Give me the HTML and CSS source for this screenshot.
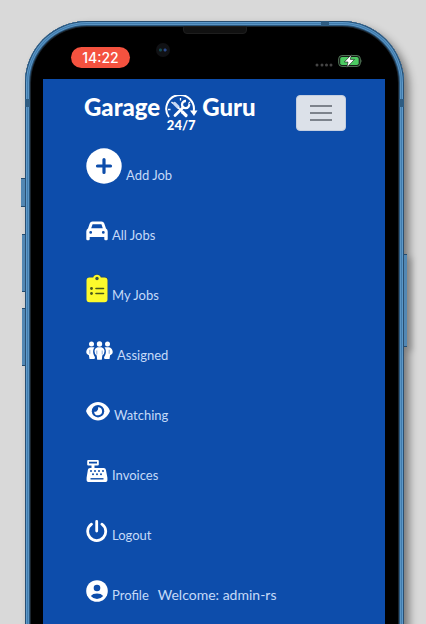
FILE: index.html
```
<!DOCTYPE html>
<html lang="en">
<head>
<meta charset="utf-8">
<meta name="viewport" content="width=device-width, initial-scale=1">
<title>Garage Guru 24/7</title>
<link rel="stylesheet" href="styles.css">
</head>
<body>
<div class="phone">
  <span class="side-key key-mute"></span>
  <span class="side-key key-up"></span>
  <span class="side-key key-down"></span>
  <span class="side-key key-power"></span>
  <span class="band band-top"></span>
  <span class="band band-left"></span>
  <span class="band band-right"></span>
  <span class="speaker"></span>
  <span class="camera"></span>
  <div class="status">
    <span class="time">14:22</span>
    <span class="indicators">
      <svg width="18" height="12" viewBox="0 0 18 12" fill="#454545"><circle cx="2" cy="10" r="1.500"/><circle cx="7" cy="10" r="1.500"/><circle cx="11.500" cy="10" r="1.500"/><circle cx="16" cy="10" r="1.500"/></svg>
      <svg width="25" height="14" viewBox="0 0 25 14"><rect x=".7" y="1.600" width="21.600" height="10.800" rx="3.200" fill="#111" stroke="#557d5c"/><rect x="2.200" y="3" width="18.500" height="8" rx="1.800" fill="#4ccb62"/><path d="M23.500 5.200q1.300 1.800 0 3.600z" fill="#557d5c"/><path d="M13.500.4 6.300 8H10L8.800 13.600l7.700-8.200h-4.200z" fill="#fff" stroke="#111" stroke-width=".6"/></svg>
    </span>
  </div>
  <div class="screen">
    <header class="header">
      <a class="logo" href="#">
        <span>Garage</span>
        <span class="emblem">
          <svg width="34" height="25" viewBox="0 0 34 25" fill="none" stroke="#fff">
            <path d="M5 22A13.800 13.800 0 1 1 29.500 17" stroke-width="2"/>
            <path d="M26 15.500h7.500L30 21z" fill="#fff" stroke="none"/>
            <path d="M16.500 3v2.500M7.500 7l1.500 1.500M4 14.500h2.500M26 7l-1.600 1.600" stroke-width="1.300"/>
            <path d="m11 20.500 8-8" stroke-width="2.800" stroke-linecap="round"/>
            <path d="M25.200 9.200a3.600 3.600 0 1 1-3.200-3.200" stroke-width="2.300"/>
            <path d="m10.500 8.500 3.500 3.500" stroke-width="3.200" stroke-linecap="round" stroke="#c8d9f4"/>
            <path d="m14 12.500 4 4" stroke-width="1.600"/>
            <path d="m18.500 17 3.500 3.500" stroke-width="3.200" stroke-linecap="round"/>
          </svg>
          <span class="hours">24/7</span>
        </span>
        <span>Guru</span>
      </a>
      <button class="toggle" type="button" aria-label="Menu">
        <svg width="22" height="18" viewBox="0 0 22 18" stroke="#7d838c" stroke-width="2"><path d="M0 2h22M0 9h22M0 16h22"/></svg>
      </button>
    </header>
    <nav>
      <ul class="menu">
        <li><a href="#"><svg width="36" height="36" viewBox="0 0 36 36"><circle cx="18" cy="18" r="17.700" fill="#fff"/><path d="M18 11.500v13M11.500 18h13" stroke="#0d4dab" stroke-width="3.200" stroke-linecap="round"/></svg><span>Add Job</span></a></li>
        <li><a href="#"><svg width="22" height="23" viewBox="0 0 22 23"><path fill="#fff" fill-rule="evenodd" d="M6.500.5h9a3 3 0 0 1 2.800 2l1.700 5a3.500 3.500 0 0 1 1.700 3V18a1.200 1.200 0 0 1-1.200 1.200h-1A1.200 1.200 0 0 1 18.300 18v-2H3.700v2a1.200 1.200 0 0 1-1.200 1.200h-1A1.200 1.200 0 0 1 .3 18v-7.500a3.500 3.500 0 0 1 1.700-3l1.700-5a3 3 0 0 1 2.800-2zM6.600 3.200 5.200 7.300h11.600l-1.400-4.100zM4.700 10a1.400 1.400 0 1 0 0 2.800 1.400 1.400 0 0 0 0-2.800zm12.600 0a1.400 1.400 0 1 0 0 2.800 1.400 1.400 0 0 0 0-2.800z"/></svg><span>All Jobs</span></a></li>
        <li><a href="#"><svg width="22" height="31" viewBox="0 0 22 31"><path d="M4 4.500h3.500a4 4 0 0 1 7.500 0h3.500a3.500 3.500 0 0 1 3.500 3V26" fill="none" stroke="#23466f" stroke-width="1.500"/><path d="M3.500 4.500h3.700a4 4 0 0 1 7.600 0h3.700a3 3 0 0 1 3 3v18.700a3 3 0 0 1-3 3h-15a3 3 0 0 1-3-3V7.500a3 3 0 0 1 3-3z" fill="#fcfa2c"/><circle cx="11" cy="5.500" r="1.700" fill="#3c5442"/><g fill="#49571d"><circle cx="5.500" cy="15.500" r="1.400"/><circle cx="5.500" cy="20.500" r="1.400"/></g><path d="M10 15.500h7.500M10 20.500h7.500" stroke="#49571d" stroke-width="1.600" stroke-linecap="round"/></svg><span>My Jobs</span></a></li>
        <li><a href="#"><svg width="27" height="23" viewBox="0 0 27 23" fill="#fff"><circle cx="5.500" cy="3" r="2.500"/><circle cx="13.500" cy="3" r="2.700"/><circle cx="21.500" cy="3" r="2.500"/><path d="M4 6.300h4.500A8 8 0 0 0 7.800 14L9 16.300l-.5 1.700h-5l-.6-3.800Q0 13 .3 10.500.8 7 4 6.300zM23 6.300h-4.500a8 8 0 0 1 .7 7.700L18 16.300l.5 1.700h5l.6-3.800q2.900-1.200 2.600-3.700-.5-3.500-3.700-4.200zM11.500 6.300h4q3 1 3 4 0 2.700-2.200 4.200l-.5 4.300h-4.600l-.5-4.300q-2.200-1.500-2.200-4.200 0-3 3-4z"/><path d="M3.800 8.800v4M10.800 9.500v4M16.200 9.500v4M23.200 8.800v4" stroke="#6b95d4" stroke-width=".8"/></svg><span>Assigned</span></a></li>
        <li><a href="#"><svg width="24" height="22" viewBox="0 0 24 22"><path d="M12 0c5.500 0 9.700 3.700 11.700 8.200a2 2 0 0 1 0 1.600C21.700 14.300 17.500 18.500 12 18.500S2.300 14.300.3 9.800a2 2 0 0 1 0-1.600C2.300 3.700 6.500 0 12 0z" fill="#fff"/><circle cx="12" cy="9.200" r="6.200" fill="#0d4dab"/><path d="M12 5.300a4 4 0 1 1-3.900 4.400c2.500.7 4.600-1.800 3.900-4.400z" fill="#fff"/></svg><span>Watching</span></a></li>
        <li><a href="#"><svg width="22" height="24" viewBox="0 0 22 24"><path fill="#fff" fill-rule="evenodd" d="M2.200 0h9.600q1 0 1 1v3.400q0 1-1 1H8.500V8h9.300q1.800 0 2.100 1.700l1.500 8v2.600q0 1.700-1.700 1.700H2.300Q.6 22 .6 20.300v-2.600l1.300-8Q2.200 8 4 8h1.500V5.400H2.200q-1 0-1-1V1q0-1 1-1zM3 1.800v1.700h8V1.800z"/><g fill="#0d4dab"><circle cx="5" cy="11" r="1"/><circle cx="9" cy="11" r="1"/><circle cx="13" cy="11" r="1"/><circle cx="17" cy="11" r="1"/><circle cx="7" cy="14.300" r="1"/><circle cx="11" cy="14.300" r="1"/><circle cx="15" cy="14.300" r="1"/></g><path d="M4.500 18.800h13" stroke="#0d4dab" stroke-width="1.400"/></svg><span>Invoices</span></a></li>
        <li><a href="#"><svg width="22" height="24" viewBox="0 0 22 24" fill="none" stroke="#fff" stroke-width="2.800" stroke-linecap="round"><path d="M10.700 1.500v9.500M5.500 4.200a9 9 0 1 0 10.400 0"/></svg><span>Logout</span></a></li>
        <li><a href="#"><svg width="22" height="24" viewBox="0 0 22 24"><circle cx="11" cy="11" r="10.800" fill="#fff"/><circle cx="11" cy="8" r="3.300" fill="#0d4dab"/><path d="M4.800 16a7 4.600 0 0 1 12.400 0 8 8 0 0 1-12.400 0z" fill="#0d4dab"/></svg><span>Profile</span></a><span class="welcome">Welcome: admin-rs</span></li>
      </ul>
    </nav>
  </div>
</div>
</body>
</html>
```
FILE: styles.css
```
* {
  box-sizing: border-box;
}

body {
  margin: 0;
  height: 100vh;
  display: flex;
  overflow: hidden;
  background: #d9d9d9;
  font-family: Lato, "Open Sans", sans-serif;
}

svg {
  display: block;
  flex: none;
}

.phone {
  position: relative;
  flex: 1;
  display: flex;
  flex-direction: column;
  margin: 21px 22px -20px 25px;
  padding: 6px 19px 0 18px;
  border-radius: 62px 62px 0 0;
  background: #000;
  box-shadow:
    inset 0 0 0 1px #294f72,
    inset 0 0 0 2px #5d9acb,
    inset 0 0 0 3px #417cae,
    inset 0 0 0 4px #5b94c2,
    inset 0 0 0 5px #28557c,
    inset 0 0 0 6px #1b252e,
    5px 5px 9px rgba(0, 0, 0, 0.45);
}

.side-key {
  position: absolute;
  left: -3px;
  width: 3px;
  height: 58px;
  background: #5287b3;
  border: solid #234c70;
  border-width: 1px 0;
}

.key-mute {
  top: 157px;
  left: -4px;
  width: 4px;
  height: 29px;
}

.key-up {
  top: 213px;
}

.key-down {
  top: 287px;
}

.key-power {
  top: 233px;
  left: auto;
  right: -3px;
  height: 93px;
  box-shadow: 4px 4px 6px rgba(0, 0, 0, 0.35);
}

.band {
  position: absolute;
  width: 5px;
  height: 8px;
  background: #2e5c82;
}

.band-top {
  top: 0;
  right: 75px;
  width: 8px;
  height: 5px;
}

.band-left {
  top: 78px;
  left: 0;
}

.band-right {
  top: 78px;
  right: 0;
}

.speaker {
  position: absolute;
  top: 5px;
  left: calc(50% - 32px);
  width: 64px;
  height: 8px;
  border: 1px solid #1e1e1e;
  border-radius: 2px 2px 4px 4px;
  background: #111;
}

.camera {
  position: absolute;
  top: 22px;
  left: 131px;
  width: 14px;
  height: 14px;
  border-radius: 50%;
  background: radial-gradient(circle at 65% 50%, #2b4a90 0 1px, transparent 2px), radial-gradient(circle at 32% 50%, #164a50 0 1px, transparent 2px), #101114;
}

.status {
  display: flex;
  justify-content: space-between;
  align-items: center;
  height: 52px;
  padding: 8px 22px 0 28px;
}

.time {
  width: 59px;
  border-radius: 11px;
  background: #f4523f;
  color: #fff;
  font: 500 14px/21px Inter, sans-serif;
  text-align: center;
}

.indicators {
  display: flex;
  align-items: center;
  gap: 5px;
  padding-top: 8px;
}

.screen {
  flex: 1;
  padding: 16px 39px 0 41px;
  background: #0d4dab;
}

.header {
  display: flex;
  justify-content: space-between;
  align-items: flex-start;
}

.logo {
  display: flex;
  gap: 4px;
  color: #fff;
  font-weight: 900;
  font-size: 24px;
  line-height: 24px;
  text-decoration: none;
}

.emblem {
  display: flex;
  flex-direction: column;
  align-items: center;
}

.hours {
  font-size: 13px;
  line-height: 10px;
}

.toggle {
  display: grid;
  place-items: center;
  width: 50px;
  height: 36px;
  padding: 0;
  border: 1px solid #c3cee0;
  border-radius: 4px;
  background: #dce1e9;
}

.menu {
  display: flex;
  flex-direction: column;
  gap: 24px;
  margin: 17px 0 0;
  padding: 0 0 0 2px;
  list-style: none;
  color: #c5daf8;
  font-size: 13px;
  line-height: 18px;
}

.menu li {
  display: flex;
  align-items: flex-end;
  gap: 9px;
  min-height: 36px;
}

.menu a {
  display: flex;
  align-items: flex-end;
  gap: 4px;
  color: inherit;
  text-decoration: none;
}

.welcome {
  font-size: 14px;
}
```
